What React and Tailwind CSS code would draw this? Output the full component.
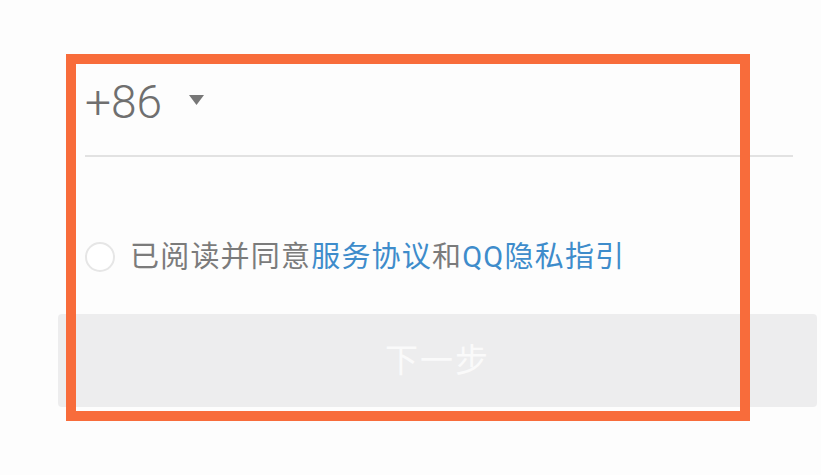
export default function App() {
  return (
    <div
      className="relative h-[475px] w-[821px] overflow-hidden bg-[#fdfdfd]"
      style={{ fontFamily: 'Roboto, "Noto Sans CJK SC", "Noto Sans", sans-serif' }}
    >
      <div className="pl-[85px] pr-[28px] pt-[76px]">
        <div className="flex h-[52px] items-center">
          <span className="text-[46px] font-light leading-none text-[#6f6f6f]">+86</span>
          <svg className="ml-[27px] mt-[-4px]" width="15" height="10" viewBox="0 0 15 10">
            <path d="M0 0h15L7.5 10z" fill="#777777" />
          </svg>
        </div>
        <div className="mt-[27px] h-[2px] bg-[#e2e2e2]" />
        <div className="mt-[85px] flex items-center">
          <span className="h-[30px] w-[30px] rounded-full border-2 border-[#e6e6e6] bg-white" />
          <p className="ml-[15px] text-[29px] leading-none tracking-[1.2px] text-[#7b7b7b]">
            已阅读并同意
            <span className="text-[#3e8ccb]">服务协议</span>
            和
            <span className="text-[#3e8ccb]">QQ隐私指引</span>
          </p>
        </div>
      </div>
      <div className="ml-[58px] mt-[42px] flex h-[93px] w-[759px] items-center justify-center rounded-[4px] bg-[#ededee]">
        <span className="text-[33px] leading-none tracking-[2px] text-[#fafafa]">下一步</span>
      </div>
      <div className="pointer-events-none absolute left-[66px] top-[54px] h-[367px] w-[684px] border-[10px] border-[#f86c3b]" />
    </div>
  );
}
